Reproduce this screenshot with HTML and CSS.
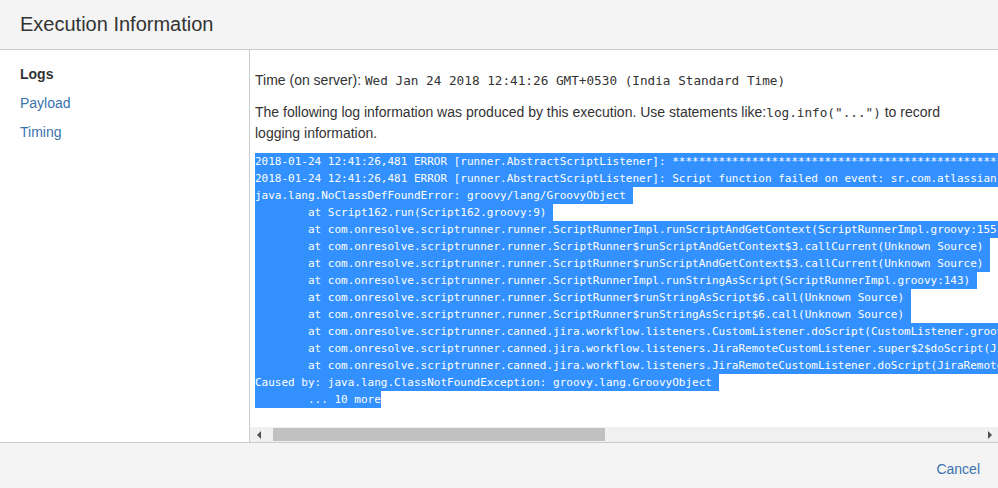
FILE: index.html
```html
<!DOCTYPE html>
<html lang="en">
<head>
    <meta charset="UTF-8">
    <title>Execution Information</title>
    <link rel="stylesheet" href="styles.css">
</head>
<body>
<div class="dialog">
    <div class="dialog-header">
        <h2 class="dialog-title">Execution Information</h2>
    </div>

    <div class="dialog-body">
        <ul class="menu">
            <li class="menu-item active">Logs</li>
            <li class="menu-item"><a href="#">Payload</a></li>
            <li class="menu-item"><a href="#">Timing</a></li>
        </ul>

        <div class="panel">
            <div class="panel-content">
                <div class="time">Time (on server): <code class="code-big">Wed Jan 24 2018 12:41:26 GMT+0530 (India Standard Time)</code></div>
                <p class="info">The following log information was produced by this execution. Use statements like:<code class="code-big">log.info("...")</code> to record logging information.</p>
<pre class="log"><span class="line">2018-01-24 12:41:26,481 ERROR [runner.AbstractScriptListener]: ************************************************************************************** </span><span class="line">2018-01-24 12:41:26,481 ERROR [runner.AbstractScriptListener]: Script function failed on event: sr.com.atlassian.jira.event.issue.IssueEvent, file: null </span><span class="line">java.lang.NoClassDefFoundError: groovy/lang/GroovyObject </span><span class="line">	at Script162.run(Script162.groovy:9) </span><span class="line">	at com.onresolve.scriptrunner.runner.ScriptRunnerImpl.runScriptAndGetContext(ScriptRunnerImpl.groovy:155) </span><span class="line">	at com.onresolve.scriptrunner.runner.ScriptRunner$runScriptAndGetContext$3.callCurrent(Unknown Source) </span><span class="line">	at com.onresolve.scriptrunner.runner.ScriptRunner$runScriptAndGetContext$3.callCurrent(Unknown Source) </span><span class="line">	at com.onresolve.scriptrunner.runner.ScriptRunnerImpl.runStringAsScript(ScriptRunnerImpl.groovy:143) </span><span class="line">	at com.onresolve.scriptrunner.runner.ScriptRunner$runStringAsScript$6.call(Unknown Source) </span><span class="line">	at com.onresolve.scriptrunner.runner.ScriptRunner$runStringAsScript$6.call(Unknown Source) </span><span class="line">	at com.onresolve.scriptrunner.canned.jira.workflow.listeners.CustomListener.doScript(CustomListener.groovy:116) </span><span class="line">	at com.onresolve.scriptrunner.canned.jira.workflow.listeners.JiraRemoteCustomListener.super$2$doScript(JiraRemoteCustomListener.groovy) </span><span class="line">	at com.onresolve.scriptrunner.canned.jira.workflow.listeners.JiraRemoteCustomListener.doScript(JiraRemoteCustomListener.groovy:35) </span><span class="line">Caused by: java.lang.ClassNotFoundException: groovy.lang.GroovyObject </span><span class="line">	... 10 more</span></pre>
            </div>
            <div class="hscroll">
                <div class="hscroll-btn"><span class="arrow-left"></span></div>
                <div class="hscroll-track">
                    <div class="hscroll-thumb"></div>
                </div>
                <div class="hscroll-btn"><span class="arrow-right"></span></div>
            </div>
        </div>
    </div>

    <div class="dialog-footer">
        <a href="#" class="cancel">Cancel</a>
    </div>
</div>
</body>
</html>
```

FILE: styles.css
```css
* {
    box-sizing: border-box;
}

body {
    margin: 0;
    font-family: "Liberation Sans", Arial, sans-serif;
    font-size: 14px;
    color: #333;
    background: #fff;
}

a {
    color: #3b73af;
    text-decoration: none;
}

.dialog {
    display: flex;
    flex-direction: column;
    width: 998px;
    height: 488px;
    overflow: hidden;
}

.dialog-header {
    height: 50px;
    padding: 0 20px;
    background-color: #f4f4f4;
    border-bottom: 1px solid #cccccc;
}

.dialog-title {
    margin: 0;
    font-size: 20px;
    font-weight: normal;
    line-height: 48px;
    color: #333;
}

.dialog-body {
    display: flex;
    flex-direction: row;
    height: 393px;
}

.menu {
    width: 250px;
    flex-shrink: 0;
    margin: 0;
    padding: 10px 20px;
    list-style: none;
    border-right: 1px solid #cccccc;
    border-bottom: 1px solid #cccccc;
}

.menu-item {
    line-height: 29px;
}

.menu-item.active {
    font-weight: bold;
    color: #333;
}

.panel {
    display: flex;
    flex-direction: column;
    flex: 1;
    min-width: 0;
}

.panel-content {
    flex: 1;
    overflow: hidden;
    padding: 20px 20px 0 5px;
}

.time {
    line-height: 20px;
    margin-bottom: 11px;
}

.code-big {
    font-family: "DejaVu Sans Mono", "Liberation Mono", monospace;
    font-size: 12.7px;
}

.info {
    margin: 0 0 10px;
    line-height: 20px;
}

.log {
    margin: 0;
    font-family: "DejaVu Sans Mono", "Liberation Mono", monospace;
    font-size: 11px;
    line-height: 17px;
    tab-size: 8;
    white-space: pre;
}

.line {
    display: block;
    width: max-content;
    background-color: #3390ff;
    color: #fff;
}

.hscroll {
    display: flex;
    flex-direction: row;
    align-items: center;
    height: 16px;
    flex-shrink: 0;
    background-color: #f0f0f0;
    border-bottom: 1px solid #cccccc;
}

.hscroll-btn {
    width: 17px;
    height: 15px;
    display: flex;
    align-items: center;
    justify-content: center;
}

.arrow-left {
    width: 0;
    height: 0;
    border-top: 4px solid transparent;
    border-bottom: 4px solid transparent;
    border-right: 4px solid #505050;
}

.arrow-right {
    width: 0;
    height: 0;
    border-top: 4px solid transparent;
    border-bottom: 4px solid transparent;
    border-left: 4px solid #505050;
}

.hscroll-track {
    flex: 1;
    height: 15px;
    display: flex;
    align-items: center;
}

.hscroll-thumb {
    margin-left: 6px;
    width: 332px;
    height: 13px;
    background-color: #c1c1c1;
}

.dialog-footer {
    flex: 1;
    padding: 16px 18px 0 0;
    background-color: #f4f4f4;
    text-align: right;
    line-height: 20px;
}
```
